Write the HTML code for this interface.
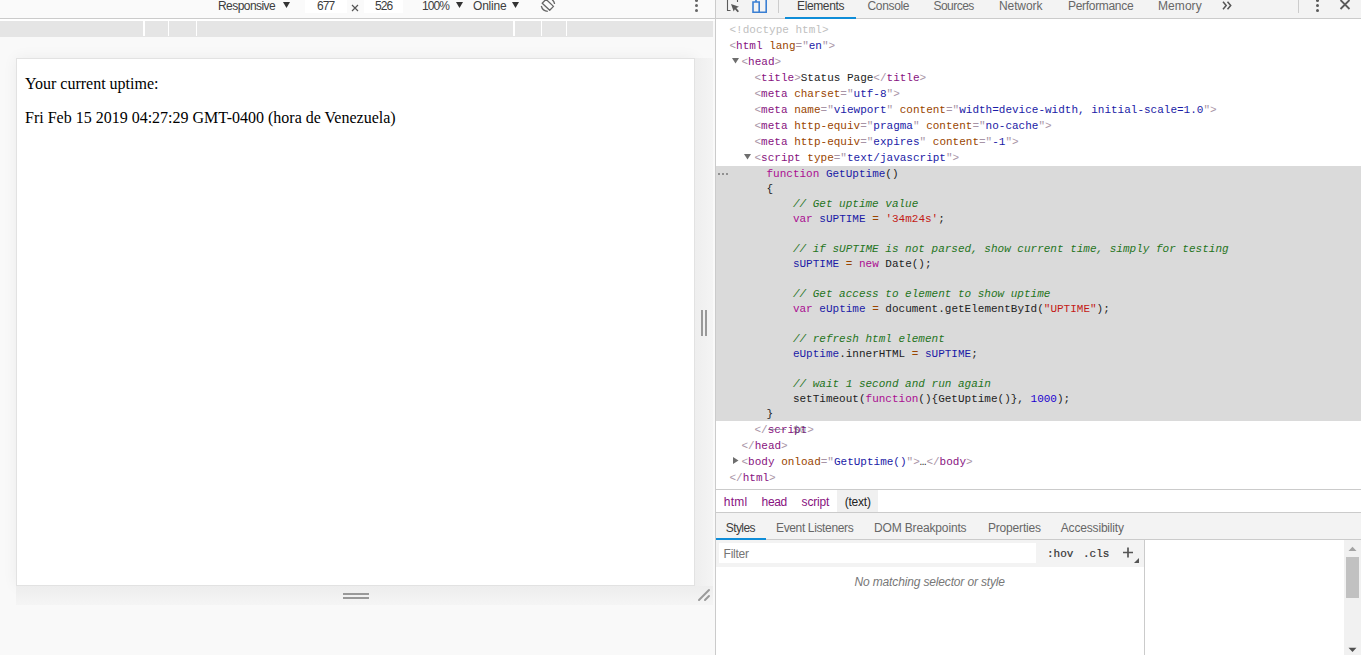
<!DOCTYPE html>
<html><head><meta charset="utf-8">
<style>
*{margin:0;padding:0;box-sizing:border-box}
html,body{width:1361px;height:655px;overflow:hidden;background:#fff;font-family:"Liberation Sans",sans-serif}
.a{position:absolute}
.ui{font-family:"Liberation Sans",sans-serif;font-size:12px;color:#333;white-space:nowrap;line-height:14px}
.mono{font-family:"Liberation Mono",monospace;font-size:11px;white-space:pre;line-height:15px}
/* colors */
.tb{color:#a894a6}.tn{color:#881280}.an{color:#994500}.av{color:#1a1aa6}.dt{color:#c0c0c0}
.kw{color:#aa0d91}.def{color:#1a1aa6}.vr{color:#1a1aa6}.cm{color:#1f7421;font-style:italic}.st{color:#c41a16}.nu{color:#1c00cf}.op{color:#994500}.tx{color:#222}
</style></head><body>
<!-- LEFT PANE -->
<div class="a" style="left:0;top:0;width:715px;height:655px;background:#f9f9f9"></div>
<div class="a" style="left:0;top:0;width:715px;height:18px;background:#fafafa"></div>
<div class="a" style="left:0;top:18px;width:715px;height:1px;background:#cbcbcb"></div>
<div class="a" style="left:0;top:19px;width:715px;height:2px;background:#fff"></div>
<!-- media bar -->
<div class="a" style="left:0;top:21px;width:713px;height:16px;background:#e5e5e5"></div>
<div class="a" style="left:143px;top:21px;width:2px;height:15px;background:#fff"></div>
<div class="a" style="left:168px;top:21px;width:1px;height:15px;background:#fff"></div>
<div class="a" style="left:196px;top:21px;width:1px;height:15px;background:#fff"></div>
<div class="a" style="left:513px;top:21px;width:2px;height:15px;background:#fff"></div>
<div class="a" style="left:541px;top:21px;width:1px;height:15px;background:#fff"></div>
<div class="a" style="left:566px;top:21px;width:1px;height:15px;background:#fff"></div>
<!-- device toolbar -->
<div class="a ui" style="left:218px;top:-1px;letter-spacing:-0.56px;color:#3d3d3d;">Responsive</div>
<svg class="a" style="left:283px;top:2px" width="7" height="6"><path d="M0 0H7L3.5 6Z" fill="#333"/></svg>
<div class="a" style="left:305px;top:0;width:42px;height:13px;background:#fff"></div>
<div class="a ui" style="left:317px;top:-1px;letter-spacing:-0.92px;color:#3d3d3d;">677</div>
<svg class="a" style="left:351px;top:4px" width="8" height="8"><path d="M1 1L7 7M7 1L1 7" stroke="#555" stroke-width="1.2"/></svg>
<div class="a" style="left:364px;top:0;width:39px;height:13px;background:#fff"></div>
<div class="a ui" style="left:375px;top:-1px;letter-spacing:-0.92px;color:#3d3d3d;">526</div>
<div class="a ui" style="left:422px;top:-1px;letter-spacing:-0.9px;color:#3d3d3d;">100%</div>
<svg class="a" style="left:456px;top:2px" width="7" height="6"><path d="M0 0H7L3.5 6Z" fill="#333"/></svg>
<div class="a ui" style="left:473px;top:-1px;letter-spacing:-0.2px;color:#3d3d3d;">Online</div>
<svg class="a" style="left:512px;top:2px" width="7" height="6"><path d="M0 0H7L3.5 6Z" fill="#333"/></svg>
<svg class="a" style="left:536px;top:0" width="24" height="14"><g fill="none" stroke="#666" stroke-width="1.3" stroke-linejoin="round"><path d="M6.2 3.2L10 -0.7L17.5 6.4L13.7 10.3Z"/><path d="M5.3 6A7 7 0 0 0 11.8 11.3"/><path d="M16.2 -0.3A7 7 0 0 1 18.6 4"/></g></svg>
<div class="a" style="left:695px;top:-1px;width:3px;height:3px;border-radius:2px;background:#666"></div>
<div class="a" style="left:695px;top:4px;width:3px;height:3px;border-radius:2px;background:#666"></div>
<div class="a" style="left:695px;top:9px;width:3px;height:3px;border-radius:2px;background:#666"></div>
<!-- page viewport -->
<div class="a" style="left:16px;top:58px;width:679px;height:528px;background:#fff;border:1px solid #e2e2e2;box-shadow:0 0 14px rgba(0,0,0,0.06)"></div>
<div class="a" style="left:25px;top:74px;font-family:'Liberation Serif',serif;font-size:16px;line-height:20px;color:#000;white-space:nowrap">Your current uptime:</div>
<div class="a" style="left:25px;top:108px;font-family:'Liberation Serif',serif;font-size:16px;line-height:20px;color:#000;white-space:nowrap">Fri Feb 15 2019 04:27:29 GMT-0400 (hora de Venezuela)</div>
<!-- right handle -->
<div class="a" style="left:695px;top:58px;width:18px;height:528px;background:linear-gradient(to right,#eeeeee,#f4f4f4)"></div>
<div class="a" style="left:701px;top:310px;width:2px;height:26px;background:#999"></div>
<div class="a" style="left:705px;top:310px;width:2px;height:26px;background:#999"></div>
<!-- bottom handle -->
<div class="a" style="left:16px;top:586px;width:697px;height:19px;background:linear-gradient(#ededed,#f5f5f5)"></div>
<div class="a" style="left:343px;top:593px;width:26px;height:2px;background:#999"></div>
<div class="a" style="left:343px;top:597px;width:26px;height:2px;background:#999"></div>
<svg class="a" style="left:697px;top:588px" width="14" height="14"><g stroke="#9a9a9a" stroke-width="2" stroke-linecap="round"><path d="M2 12L12 2"/><path d="M8 12L12 8"/></g></svg>
<!-- divider -->
<div class="a" style="left:715px;top:0;width:1px;height:655px;background:#cbcbcb"></div>

<!-- RIGHT PANE -->
<div class="a" style="left:716px;top:0;width:645px;height:18px;background:#f3f3f3"></div>
<div class="a" style="left:716px;top:18px;width:645px;height:1px;background:#cbcbcb"></div>
<div class="a" style="left:785px;top:17px;width:71px;height:2px;background:#0f8dd8"></div>

<!-- tabs -->
<svg class="a" style="left:724px;top:-2px" width="18" height="16"><g fill="none" stroke="#5a5a5a" stroke-width="1.1"><path d="M3.5 0V12.5H6.5M13.5 0V4"/></g><path d="M7 6L15 8.8L12.3 10L15 13.2L13.6 14.3L10.9 11.2L9.7 13.6Z" fill="#5a5a5a"/></svg>
<svg class="a" style="left:751px;top:-2px" width="18" height="16"><g fill="none" stroke="#3a7fd3" stroke-width="1.6"><path d="M5 0V3.2M15.2 0V14.2H2V4H8.2V14"/></g></svg>
<div class="a" style="left:778px;top:0;width:1px;height:13px;background:#ccc"></div>
<div class="a ui" style="left:797px;top:-1px;letter-spacing:-0.37px;color:#3d3d3d;">Elements</div>
<div class="a ui" style="left:867.5px;top:-1px;letter-spacing:-0.34px;color:#676767;">Console</div>
<div class="a ui" style="left:933.5px;top:-1px;letter-spacing:-0.54px;color:#676767;">Sources</div>
<div class="a ui" style="left:999px;top:-1px;letter-spacing:-0.1px;color:#676767;">Network</div>
<div class="a ui" style="left:1068px;top:-1px;letter-spacing:-0.31px;color:#676767;">Performance</div>
<div class="a ui" style="left:1158px;top:-1px;letter-spacing:0.07px;color:#676767;">Memory</div>
<svg class="a" style="left:1222px;top:1px" width="11" height="9"><g fill="none" stroke="#555" stroke-width="1.5"><path d="M1 0.8L4.2 4.5L1 8.2M5.5 0.8L8.7 4.5L5.5 8.2"/></g></svg>
<div class="a" style="left:1298px;top:0;width:1px;height:13px;background:#ccc"></div>
<div class="a" style="left:1316px;top:-1px;width:3px;height:3px;border-radius:2px;background:#5a5a5a"></div>
<div class="a" style="left:1316px;top:4px;width:3px;height:3px;border-radius:2px;background:#5a5a5a"></div>
<div class="a" style="left:1316px;top:9px;width:3px;height:3px;border-radius:2px;background:#5a5a5a"></div>
<svg class="a" style="left:1339px;top:-1px" width="12" height="12"><g stroke="#5a5a5a" stroke-width="1.8"><path d="M1.5 1L10.5 10M10.5 1L1.5 10"/></g></svg>

<!-- elements tree -->
<div class="a" style="left:716px;top:166px;width:645px;height:255px;background:#dadada"></div>
<div class="a" style="left:718px;top:173px;width:2px;height:2px;background:#777;border-radius:1px"></div>
<div class="a" style="left:722px;top:173px;width:2px;height:2px;background:#777;border-radius:1px"></div>
<div class="a" style="left:726px;top:173px;width:2px;height:2px;background:#777;border-radius:1px"></div>
<div class="a mono" style="left:729.5px;top:22px;line-height:16px"><span class="dt">&lt;!doctype html&gt;</span>
<span class="tb">&lt;</span><span class="tn">html</span> <span class="an">lang</span><span class="tb">="</span><span class="av">en</span><span class="tb">"&gt;</span></div>
<div class="a mono" style="left:741.5px;top:54px;line-height:16px"><span class="tb">&lt;</span><span class="tn">head</span><span class="tb">&gt;</span></div>
<svg class="a" style="left:732px;top:58px" width="8" height="6"><path d="M0 0H7L3.5 5.5Z" fill="#6e6e6e"/></svg>
<div class="a mono" style="left:754.5px;top:70px;line-height:16px"><span class="tb">&lt;</span><span class="tn">title</span><span class="tb">&gt;</span><span class="tx">Status Page</span><span class="tb">&lt;/</span><span class="tn">title</span><span class="tb">&gt;</span>
<span class="tb">&lt;</span><span class="tn">meta</span> <span class="an">charset</span><span class="tb">="</span><span class="av">utf-8</span><span class="tb">"&gt;</span>
<span class="tb">&lt;</span><span class="tn">meta</span> <span class="an">name</span><span class="tb">="</span><span class="av">viewport</span><span class="tb">"</span> <span class="an">content</span><span class="tb">="</span><span class="av">width=device-width, initial-scale=1.0</span><span class="tb">"&gt;</span>
<span class="tb">&lt;</span><span class="tn">meta</span> <span class="an">http-equiv</span><span class="tb">="</span><span class="av">pragma</span><span class="tb">"</span> <span class="an">content</span><span class="tb">="</span><span class="av">no-cache</span><span class="tb">"&gt;</span>
<span class="tb">&lt;</span><span class="tn">meta</span> <span class="an">http-equiv</span><span class="tb">="</span><span class="av">expires</span><span class="tb">"</span> <span class="an">content</span><span class="tb">="</span><span class="av">-1</span><span class="tb">"&gt;</span>
<span class="tb">&lt;</span><span class="tn">script</span> <span class="an">type</span><span class="tb">="</span><span class="av">text/javascript</span><span class="tb">"&gt;</span></div>
<svg class="a" style="left:744px;top:154px" width="8" height="6"><path d="M0 0H7L3.5 5.5Z" fill="#6e6e6e"/></svg>
<div class="a mono" style="left:766.5px;top:167px;line-height:15px;color:#222"><span class="kw">function</span> <span class="def">GetUptime</span>()
{
    <span class="cm">// Get uptime value</span>
    <span class="kw">var</span> <span class="def">sUPTIME</span> <span class="op">=</span> <span class="st">'34m24s'</span>;

    <span class="cm">// if sUPTIME is not parsed, show current time, simply for testing</span>
    <span class="vr">sUPTIME</span> <span class="op">=</span> <span class="kw">new</span> Date();

    <span class="cm">// Get access to element to show uptime</span>
    <span class="kw">var</span> <span class="def">eUptime</span> <span class="op">=</span> document.getElementById(<span class="st">"UPTIME"</span>);

    <span class="cm">// refresh html element</span>
    <span class="vr">eUptime</span>.innerHTML <span class="op">=</span> <span class="vr">sUPTIME</span>;

    <span class="cm">// wait 1 second and run again</span>
    setTimeout(<span class="kw">function</span>(){GetUptime()}, <span class="nu">1000</span>);
}</div>
<div class="a mono" style="left:754.5px;top:422px;line-height:16px"><span class="tb">&lt;/</span><span class="tn">script</span><span class="tb">&gt;</span></div>
<div class="a" style="left:768px;top:429px;width:18px;height:1px;background:rgba(90,90,110,0.55)"></div>
<div class="a mono" style="left:793px;top:422px;line-height:16px;color:rgba(70,70,90,0.6)">$0</div>
<div class="a mono" style="left:741.5px;top:438px;line-height:16px"><span class="tb">&lt;/</span><span class="tn">head</span><span class="tb">&gt;</span>
<span class="tb">&lt;</span><span class="tn">body</span> <span class="an">onload</span><span class="tb">="</span><span class="av">GetUptime()</span><span class="tb">"&gt;</span><span class="tx">…</span><span class="tb">&lt;/</span><span class="tn">body</span><span class="tb">&gt;</span></div>
<svg class="a" style="left:733px;top:457px" width="6" height="8"><path d="M0 0V7L5.5 3.5Z" fill="#6e6e6e"/></svg>
<div class="a mono" style="left:729.5px;top:470px;line-height:16px"><span class="tb">&lt;/</span><span class="tn">html</span><span class="tb">&gt;</span></div>

<!-- breadcrumbs -->
<div class="a" style="left:716px;top:489px;width:645px;height:1px;background:#cbcbcb"></div>
<div class="a" style="left:837px;top:490px;width:41px;height:22px;background:#f0f0f0"></div>
<div class="a ui" style="left:723.7px;top:495px;letter-spacing:0.3px;color:#881280;">html</div>
<div class="a ui" style="left:761.6px;top:495px;letter-spacing:-0.34px;color:#881280;">head</div>
<div class="a ui" style="left:801.6px;top:495px;letter-spacing:-0.19px;color:#881280;">script</div>
<div class="a ui" style="left:844.7px;top:495px;letter-spacing:-0.21px;color:#222;">(text)</div>

<!-- styles tabs -->
<div class="a" style="left:716px;top:512px;width:645px;height:1px;background:#cbcbcb"></div>
<div class="a" style="left:716px;top:513px;width:645px;height:26px;background:#f3f3f3"></div>
<div class="a" style="left:716px;top:539px;width:645px;height:1px;background:#cbcbcb"></div>
<div class="a" style="left:716px;top:538px;width:50px;height:2px;background:#0f8dd8"></div>
<div class="a ui" style="left:725.7px;top:521px;letter-spacing:-0.56px;color:#3d3d3d;">Styles</div>
<div class="a ui" style="left:776px;top:521px;letter-spacing:-0.36px;color:#676767;">Event Listeners</div>
<div class="a ui" style="left:874px;top:521px;letter-spacing:-0.15px;color:#676767;">DOM Breakpoints</div>
<div class="a ui" style="left:988px;top:521px;letter-spacing:-0.19px;color:#676767;">Properties</div>
<div class="a ui" style="left:1060.8px;top:521px;letter-spacing:-0.18px;color:#676767;">Accessibility</div>

<!-- styles pane -->
<div class="a" style="left:716px;top:540px;width:428px;height:27px;background:#f3f3f3"></div>
<div class="a" style="left:719px;top:543px;width:317px;height:20px;background:#fff"></div>
<div class="a ui" style="left:723.6px;top:547px;letter-spacing:-0.25px;color:#757575;">Filter</div>
<div class="a mono" style="left:1047px;top:547px;color:#333;line-height:15px;-webkit-text-stroke:0.2px #333">:hov</div>
<div class="a mono" style="left:1083px;top:547px;color:#333;line-height:15px;-webkit-text-stroke:0.2px #333">.cls</div>
<svg class="a" style="left:1121px;top:546px" width="20" height="18"><g stroke="#555" stroke-width="1.7"><path d="M7 1.5V11.5M2 6.5H12"/></g><path d="M18 12V17H13Z" fill="#555"/></svg>
<div class="a ui" style="left:854.5px;top:575px;letter-spacing:-0.15px;color:#777;font-style:italic;">No matching selector or style</div>
<div class="a" style="left:1144px;top:540px;width:1px;height:115px;background:#cbcbcb"></div>
<!-- scrollbar -->
<div class="a" style="left:1344px;top:540px;width:17px;height:115px;background:#f1f1f1"></div>
<svg class="a" style="left:1348px;top:546px" width="9" height="6"><path d="M0.5 5L4.5 0.8L8.5 5Z" fill="#a3a3a3"/></svg>
<div class="a" style="left:1346px;top:557px;width:13px;height:41px;background:#c1c1c1"></div>
<svg class="a" style="left:1348px;top:647px" width="9" height="6"><path d="M0.5 0.8L4.5 5L8.5 0.8Z" fill="#505050"/></svg>
</body></html>
